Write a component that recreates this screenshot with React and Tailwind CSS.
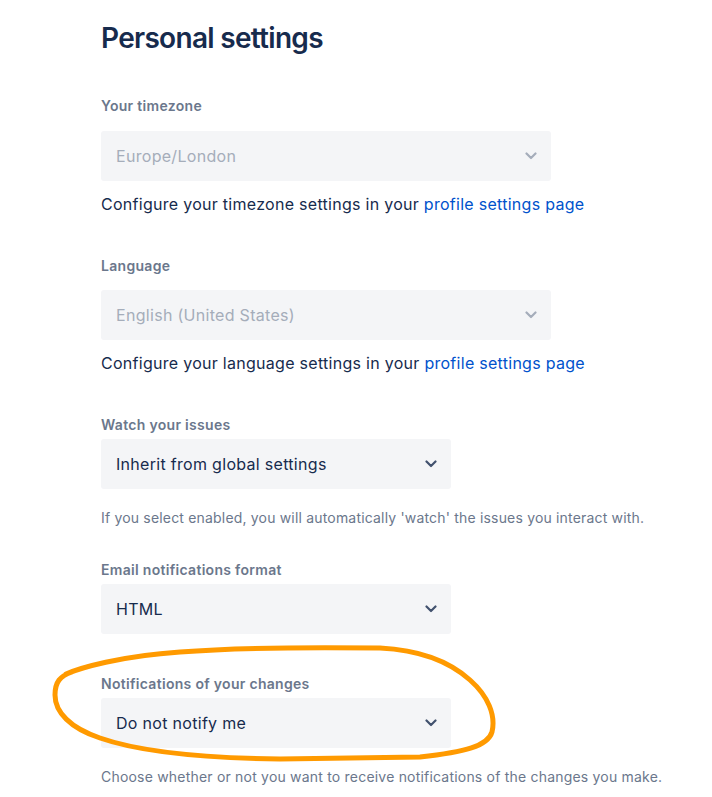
import React from "react";

const Chevron = ({ color }) => (
  <svg width="12" height="8" viewBox="0 0 12 8" fill="none">
    <path d="M1.5 1.5 L6 6 L10.5 1.5" stroke={color} strokeWidth="2.2" strokeLinecap="round" strokeLinejoin="round" />
  </svg>
);

const Select = ({ value, disabled, wide }) => (
  <div
    className={
      "h-[50px] rounded-[3px] bg-[#f4f5f7] flex items-center justify-between pl-[15px] pr-[14px] text-[16px] tracking-[0.3px] " +
      (wide ? "w-[450px] " : "w-[350px] ") +
      (disabled ? "text-[#a5adba]" : "text-[#172b4d]")
    }
  >
    <span>{value}</span>
    <Chevron color={disabled ? "#a5adba" : "#42526e"} />
  </div>
);

const Label = ({ children }) => (
  <div className="text-[14px] leading-[20px] font-semibold tracking-[0.3px] text-[#6b778c]">{children}</div>
);

export default function App() {
  return (
    <div
      className="relative w-[712px] h-[797px] bg-white overflow-hidden"
      style={{ fontFamily: "Inter, 'Liberation Sans', sans-serif" }}
    >
      <div className="pl-[101px] pt-[22px] flex flex-col">
        <h1 className="text-[28px] leading-[32px] font-semibold tracking-[-0.025em] text-[#172b4d]">
          Personal settings
        </h1>

        <div className="mt-[42px]">
          <Label>Your timezone</Label>
        </div>
        <div className="mt-[15px]">
          <Select value="Europe/London" disabled wide />
        </div>
        <p className="mt-[11px] text-[16px] leading-[24px] tracking-[0.28px] text-[#172b4d]">
          Configure your timezone settings in your{" "}
          <a className="text-[#0052cc]">profile settings page</a>
        </p>

        <div className="mt-[40px]">
          <Label>Language</Label>
        </div>
        <div className="mt-[14px]">
          <Select value="English (United States)" disabled wide />
        </div>
        <p className="mt-[11px] text-[16px] leading-[24px] tracking-[0.28px] text-[#172b4d]">
          Configure your language settings in your{" "}
          <a className="text-[#0052cc]">profile settings page</a>
        </p>

        <div className="mt-[40px]">
          <Label>Watch your issues</Label>
        </div>
        <div className="mt-[4px]">
          <Select value="Inherit from global settings" />
        </div>
        <p className="mt-[19px] text-[14px] leading-[20px] tracking-[0.18px] text-[#6b778c] whitespace-nowrap">
          If you select enabled, you will automatically 'watch' the issues you interact with.
        </p>

        <div className="mt-[32px]">
          <Label>Email notifications format</Label>
        </div>
        <div className="mt-[4px]">
          <Select value="HTML" />
        </div>

        <div className="mt-[40px]">
          <Label>Notifications of your changes</Label>
        </div>
        <div className="mt-[4px]">
          <Select value="Do not notify me" />
        </div>
        <p className="mt-[19px] text-[14px] leading-[20px] tracking-[0.2px] text-[#6b778c] whitespace-nowrap">
          Choose whether or not you want to receive notifications of the changes you make.
        </p>
      </div>

      {/* hand-drawn highlight */}
      <svg
        className="absolute inset-0 pointer-events-none"
        width="712"
        height="797"
        viewBox="0 0 712 797"
        fill="none"
      >
        <path
          d="M66 674 C80 668, 120 656, 180 652 C230 648, 300 647, 380 648 C420 650, 450 662, 470 680 C488 696, 496 715, 492 732 C488 746, 465 752, 420 757 L280 759 C200 758, 140 752, 100 738 C70 728, 55 712, 55 695 C55 682, 60 676, 72 672"
          stroke="#ff9a00"
          strokeWidth="5"
          strokeLinecap="round"
          strokeLinejoin="round"
        />
      </svg>
    </div>
  );
}
